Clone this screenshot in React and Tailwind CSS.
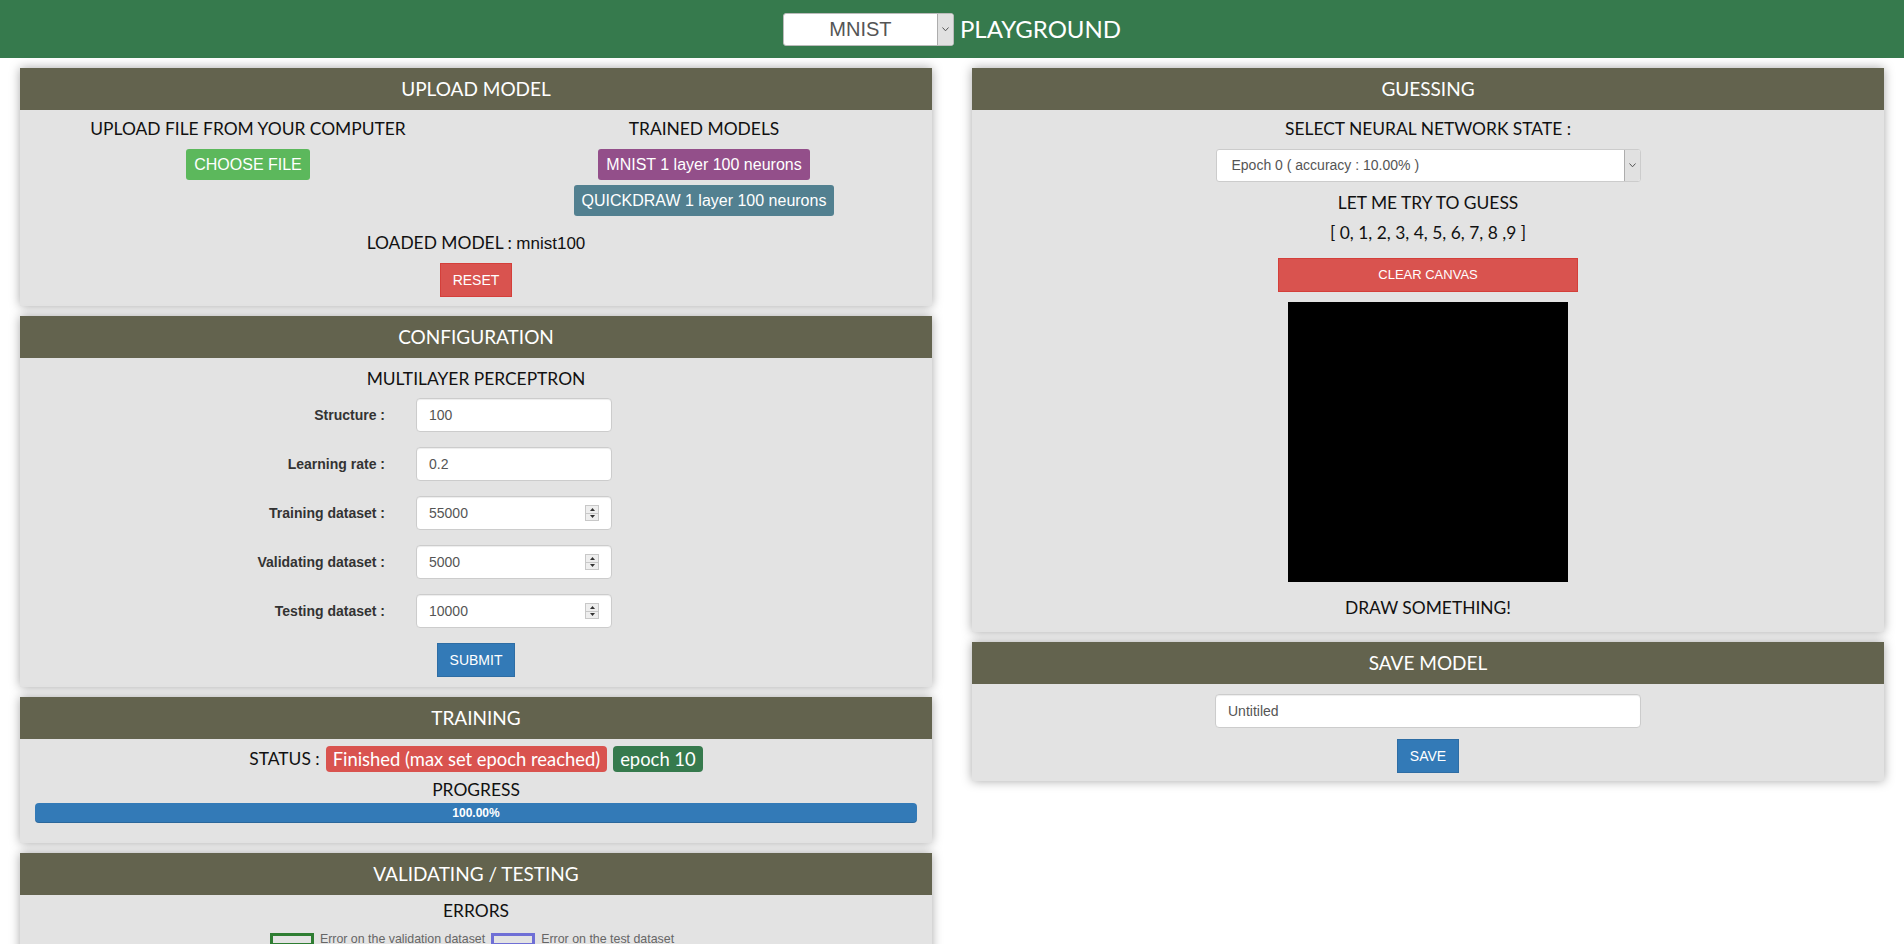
import React from "react";

const Panel = ({ title, className, children }) => (
  <section className="bg-[#e3e3e3] shadow-[0_0_10px_rgba(0,0,0,0.35)]">
    <div className="h-[42px] bg-[#63634e] flex items-center justify-center text-white text-[19px] font-['Lato',sans-serif]">
      {title}
    </div>
    <div className={className}>{children}</div>
  </section>
);

const Heading = ({ className = "", children }) => (
  <h3 className={`text-[17.4px] leading-[24px] text-[#111] font-['Lato',sans-serif] ${className}`}>{children}</h3>
);

// small windows-like dropdown arrow box
const SelectArrow = ({ className = "" }) => (
  <div className={`w-[16px] self-stretch bg-[#e1e1e1] border-l border-[#adadad] flex items-center justify-center ${className}`}>
    <svg width="7" height="5" viewBox="0 0 7 5">
      <path d="M0.5 0.5 L3.5 3.8 L6.5 0.5" fill="none" stroke="#555" strokeWidth="1" />
    </svg>
  </div>
);

const Spinner = () => (
  <div className="absolute right-[13px] top-1/2 -translate-y-1/2 w-[14px] h-[16px] flex flex-col border border-[#c8c8c8] bg-[#eee]">
    <div className="flex-1 flex items-center justify-center border-b border-[#c8c8c8]">
      <svg width="5" height="3" viewBox="0 0 5 3"><path d="M0 3 L2.5 0 L5 3Z" fill="#333" /></svg>
    </div>
    <div className="flex-1 flex items-center justify-center">
      <svg width="5" height="3" viewBox="0 0 5 3"><path d="M0 0 L2.5 3 L5 0Z" fill="#333" /></svg>
    </div>
  </div>
);

const fields = [
  { label: "Structure :", value: "100", spin: false },
  { label: "Learning rate :", value: "0.2", spin: false },
  { label: "Training dataset :", value: "55000", spin: true },
  { label: "Validating dataset :", value: "5000", spin: true },
  { label: "Testing dataset :", value: "10000", spin: true },
];

const inputCls =
  "w-full h-[34px] bg-white border border-[#ccc] rounded-[4px] shadow-[inset_0_1px_1px_rgba(0,0,0,0.075)] pl-[12px] text-[14px] text-[#555] font-['Liberation_Sans',Arial,sans-serif] outline-none";

const btnCls =
  "h-[34px] px-[12px] text-white text-[14px] border font-['Liberation_Sans',Arial,sans-serif]";

export default function App() {
  return (
    <div className="h-screen overflow-hidden bg-white">
      {/* top bar */}
      <header className="h-[58px] bg-[#367a4d] flex items-center justify-center gap-[6px]">
        <div className="w-[171px] h-[33px] bg-white border border-[#bbb] rounded-[3px] flex overflow-hidden">
          <div className="flex-1 flex items-center justify-center text-[20px] text-[#555] font-['Liberation_Sans',Arial,sans-serif]">
            MNIST
          </div>
          <SelectArrow />
        </div>
        <span className="text-white text-[24px] font-['Lato',sans-serif]">PLAYGROUND</span>
      </header>

      <main className="grid grid-cols-2 gap-x-[40px] px-[20px] pt-[10px] items-start">
        {/* left column */}
        <div className="flex flex-col gap-[10px]">
          <Panel title="UPLOAD MODEL" className="pt-[7px] pb-[9px] flex flex-col items-center">
            <div className="grid grid-cols-2 w-full">
              <div className="flex flex-col items-center">
                <Heading>UPLOAD FILE FROM YOUR COMPUTER</Heading>
                <button className="mt-[8px] h-[31px] px-[8px] rounded-[3px] bg-[#5cb85c] text-white text-[16px] font-['Liberation_Sans',Arial,sans-serif]">
                  CHOOSE FILE
                </button>
              </div>
              <div className="flex flex-col items-center">
                <Heading>TRAINED MODELS</Heading>
                <button className="mt-[8px] h-[31px] px-[8px] rounded-[3px] bg-[#934f8a] text-white text-[16px] font-['Liberation_Sans',Arial,sans-serif]">
                  MNIST 1 layer 100 neurons
                </button>
                <button className="mt-[5px] h-[31px] px-[8px] rounded-[3px] bg-[#528090] text-white text-[16px] font-['Liberation_Sans',Arial,sans-serif]">
                  QUICKDRAW 1 layer 100 neurons
                </button>
              </div>
            </div>
            <Heading className="mt-[15px]">
              LOADED MODEL : <span className="font-['Liberation_Sans',Arial,sans-serif] text-[17px]">mnist100</span>
            </Heading>
            <button className={`${btnCls} mt-[7px] bg-[#d9534f] border-[#d43f3a]`}>RESET</button>
          </Panel>

          <Panel title="CONFIGURATION" className="pt-[9px] pb-[10px] flex flex-col items-center">
            <Heading>MULTILAYER PERCEPTRON</Heading>
            <div className="mt-[7px] w-full flex flex-col gap-[15px]">
              {fields.map((f) => (
                <div key={f.label} className="flex items-center">
                  <label className="w-[365px] text-right text-[14px] font-bold text-[#333] font-['Liberation_Sans',Arial,sans-serif]">
                    {f.label}
                  </label>
                  <div className="relative ml-[31px] w-[196px]">
                    <input className={inputCls} defaultValue={f.value} />
                    {f.spin && <Spinner />}
                  </div>
                </div>
              ))}
            </div>
            <button className={`${btnCls} mt-[15px] bg-[#337ab7] border-[#2e6da4]`}>SUBMIT</button>
          </Panel>

          <Panel title="TRAINING" className="pt-[7px] pb-[20px] px-[15px] flex flex-col items-center">
            <div className="flex items-center gap-[6px] h-[26px]">
              <Heading>STATUS :</Heading>
              <span className="h-[26px] px-[7px] rounded-[4px] bg-[#d9534f] text-white text-[18.4px] leading-[26px] font-['Lato',sans-serif]">
                Finished (max set epoch reached)
              </span>
              <span className="h-[26px] px-[7px] rounded-[4px] bg-[#367a4d] text-white text-[18.4px] leading-[26px] font-['Lato',sans-serif]">
                epoch 10
              </span>
            </div>
            <Heading className="mt-[6px]">PROGRESS</Heading>
            <div className="mt-[1px] w-full h-[20px] rounded-[4px] bg-[#337ab7] flex items-center justify-center text-white text-[12px] font-bold font-['Liberation_Sans',Arial,sans-serif] shadow-[inset_0_-1px_0_rgba(0,0,0,0.15)]">
              100.00%
            </div>
          </Panel>

          <Panel title="VALIDATING / TESTING" className="pt-[4px] pb-[20px] flex flex-col items-center">
            <Heading>ERRORS</Heading>
            <div className="mt-[10px] -ml-[8px] flex items-start gap-[6px] text-[12.4px] text-[#666] font-['Liberation_Sans',Arial,sans-serif]">
              <span className="w-[44px] h-[13px] border-[3px] border-[#2e7d32]" />
              <span className="leading-[13px]">Error on the validation dataset</span>
              <span className="w-[44px] h-[13px] border-[3px] border-[#6f6fd6]" />
              <span className="leading-[13px]">Error on the test dataset</span>
            </div>
            <div className="h-[200px]" />
          </Panel>
        </div>

        {/* right column */}
        <div className="flex flex-col gap-[10px]">
          <Panel title="GUESSING" className="pt-[7px] pb-[12px] flex flex-col items-center">
            <Heading>SELECT NEURAL NETWORK STATE :</Heading>
            <div className="mt-[8px] w-[425px] h-[33px] bg-white border border-[#ccc] rounded-[3px] flex overflow-hidden">
              <div className="flex-1 flex items-center pl-[15px] text-[14px] text-[#555] font-['Liberation_Sans',Arial,sans-serif]">
                Epoch 0 ( accuracy : 10.00% )
              </div>
              <SelectArrow />
            </div>
            <Heading className="mt-[9px]">LET ME TRY TO GUESS</Heading>
            <p className="mt-[6px] text-[17.4px] leading-[24px] text-[#111] font-['Lato',sans-serif]">
              [ 0, 1, 2, 3, 4, 5, 6, 7, 8 ,9 ]
            </p>
            <button className="mt-[13px] w-[300px] h-[34px] bg-[#d9534f] border border-[#d43f3a] text-white text-[13px] font-['Liberation_Sans',Arial,sans-serif]">
              CLEAR CANVAS
            </button>
            <div className="mt-[10px] w-[280px] h-[280px] bg-black" />
            <Heading className="mt-[14px]">DRAW SOMETHING!</Heading>
          </Panel>

          <Panel title="SAVE MODEL" className="pt-[10px] pb-[8px] flex flex-col items-center">
            <div className="w-[426px]">
              <input className={`${inputCls} h-[33px]`} defaultValue="Untitiled" />
            </div>
            <button className={`${btnCls} mt-[11px] bg-[#337ab7] border-[#2e6da4]`}>SAVE</button>
          </Panel>
        </div>
      </main>
    </div>
  );
}
